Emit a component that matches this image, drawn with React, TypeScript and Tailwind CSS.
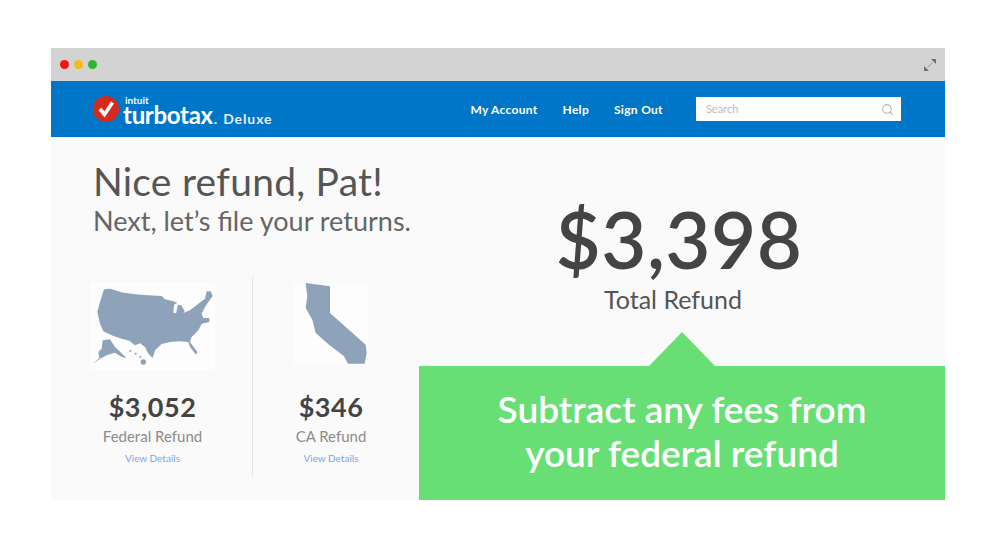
import React from "react";
import { Search } from "lucide-react";

const Sans = "font-['Lato','Noto_Sans',sans-serif]";

const UsaMap = () => (
  <svg className="w-[125px] h-[88px] bg-[#fdfdfd]" viewBox="0 0 375 264">
    <g fill="#8ea3ba">
      <path d="M42 22 L60 20 L100 32 L150 38 L215 42 L225 52 L250 58 L262 62 L252 68 L250 92 L258 94 L264 68 L274 70 L284 88 L280 93 L300 85 L325 65 L345 50 L350 28 L362 28 L368 42 L355 60 L345 75 L335 95 L340 108 L358 108 L358 120 L335 125 L325 145 L305 165 L300 180 L322 210 L318 218 L300 195 L295 180 L268 178 L240 180 L215 186 L195 205 L188 228 L175 215 L165 195 L150 184 L135 190 L118 176 L95 170 L70 162 L40 148 L30 125 L22 90 L30 60 Z" />
      <path d="M38 175 L60 172 L75 195 L110 228 L95 225 L75 212 L50 220 L30 230 L8 246 L28 228 L25 210 L35 200 Z" />
      <circle cx="160" cy="240" r="8" />
      <circle cx="121" cy="207" r="3" />
      <circle cx="137" cy="215" r="3" />
      <circle cx="151" cy="225" r="3" />
    </g>
  </svg>
);

const CaliforniaMap = () => (
  <svg className="w-[74px] h-[82px] mb-[5px] bg-[#fdfdfd]" viewBox="640 40 222 246">
    <path
      fill="#8ea3ba"
      d="M675 40 L748 50 L748 130 L855 225 L858 250 L852 282 L802 282 L790 260 L745 225 L705 190 L695 150 L675 115 L680 80 Z"
    />
  </svg>
);

const RefundColumn = ({
  map,
  amount,
  label,
  width,
}: {
  map: React.ReactNode;
  amount: string;
  label: string;
  width: string;
}) => (
  <div className={`flex flex-col items-center ${width}`}>
    <div className="h-[93px] flex items-end">{map}</div>
    <div className="mt-[20px] text-[27px] leading-[34px] font-bold tracking-[0.5px] text-[#444444] whitespace-nowrap">
      {amount}
    </div>
    <div className="mt-[2px] text-[15px] leading-[20px] text-[#8c8c8c] whitespace-nowrap">{label}</div>
    <div className="mt-[5px] text-[10px] leading-[14px] text-[#73a9ea] whitespace-nowrap">View Details</div>
  </div>
);

export default function App() {
  return (
    <div className={`w-[1000px] h-[545px] bg-white pt-[48px] pl-[51px] overflow-hidden ${Sans}`}>
      <div className="w-[894px] h-[452px] flex flex-col">
        {/* Browser chrome */}
        <div className="h-[33px] bg-[#d3d3d3] flex items-center justify-between pl-[9px] pr-[8px]">
          <div className="flex items-center gap-[5px]">
            <span className="w-[9px] h-[9px] rounded-full bg-[#f01616]" />
            <span className="w-[9px] h-[9px] rounded-full bg-[#f5b91e]" />
            <span className="w-[9px] h-[9px] rounded-full bg-[#2fb52f]" />
          </div>
          <svg className="w-[14px] h-[14px]" viewBox="0 0 14 14" fill="#6e6e6e">
            <path d="M8 1 L13 1 L13 6 Z" />
            <path d="M1 8 L1 13 L6 13 Z" />
            <path d="M9 4 L10 5 L5 10 L4 9 Z" opacity="0.35" />
          </svg>
        </div>

        {/* Header */}
        <div className="h-[56px] bg-[#0076c8] flex items-center pl-[42px] text-white">
          <div className="flex items-center">
            <svg className="w-[26px] h-[26px]" viewBox="0 0 26 26">
              <circle cx="13" cy="13" r="13" fill="#d52b1e" />
              <path d="M7 13 L11.5 18.5 L19.5 6.5" fill="none" stroke="#fff" strokeWidth="3.6" />
            </svg>
            <div className="ml-[4px] mt-[2px] flex flex-col">
              <span className="text-[10px] leading-[10px] font-bold ml-[2px]">intuit</span>
              <div className="flex items-baseline h-[20px]">
                <span className="text-[24px] leading-[20px] font-bold tracking-[-0.3px]">turbotax</span>
                <span className="text-[14px] leading-[20px] font-bold ml-[1px]">.</span>
                <span className="text-[14px] leading-[20px] font-bold ml-[6px] text-[#e3f0fa] tracking-[0.9px]">Deluxe</span>
              </div>
            </div>
          </div>
          <nav className="ml-[198px] flex items-center gap-[25px] text-[12px] font-bold tracking-[0.3px] pt-[2px]">
            <span>My Account</span>
            <span>Help</span>
            <span>Sign Out</span>
          </nav>
          <div className="ml-[33px] w-[205px] h-[24px] bg-white flex items-center justify-between pl-[10px] pr-[7px]">
            <span className="text-[11px] text-[#bdbdbd]">Search</span>
            <Search className="w-[13px] h-[13px] text-[#b5b5b5]" />
          </div>
        </div>

        {/* Body */}
        <div className="relative flex-1 bg-[#fafafa] flex">
          <div className="w-[368px] pl-[42px] pt-[21px]">
            <h1 className="text-[39px] leading-[46px] text-[#555555] tracking-[0.25px] whitespace-nowrap">Nice refund, Pat!</h1>
            <p className="mt-[1px] text-[27px] leading-[32px] text-[#666666] whitespace-nowrap">Next, let’s file your returns.</p>
            <div className="mt-[40px] -ml-[3px] flex">
              <RefundColumn map={<UsaMap />} amount="$3,052" label="Federal Refund" width="w-[125px]" />
              <div className="ml-[37px] w-px h-[199px] bg-[#e4e4e4]" />
              <RefundColumn map={<CaliforniaMap />} amount="$346" label="CA Refund" width="w-[74px] ml-[41px]" />
            </div>
          </div>

          <div className="w-[520px] flex flex-col items-center pt-[58px]">
            <div className="text-[78px] leading-[88px] text-[#444444] font-semibold tracking-[0.5px]">$3,398</div>
            <div className="mt-[1px] text-[25px] leading-[30px] text-[#555555] pr-[12px]">Total Refund</div>
          </div>

          {/* Callout */}
          <div className="absolute right-0 bottom-0 w-[526px] h-[134px] bg-[#68df75] flex items-center justify-center">
            <div className="absolute -top-[34px] left-[230px] w-[66px] h-[34px] bg-[#68df75] [clip-path:polygon(50%_0,100%_100%,0_100%)]" />
            <p className="-mt-[5px] text-center text-white text-[37px] leading-[44px] font-semibold">
              Subtract any fees from
              <br />
              your federal refund
            </p>
          </div>
        </div>
      </div>
    </div>
  );
}
